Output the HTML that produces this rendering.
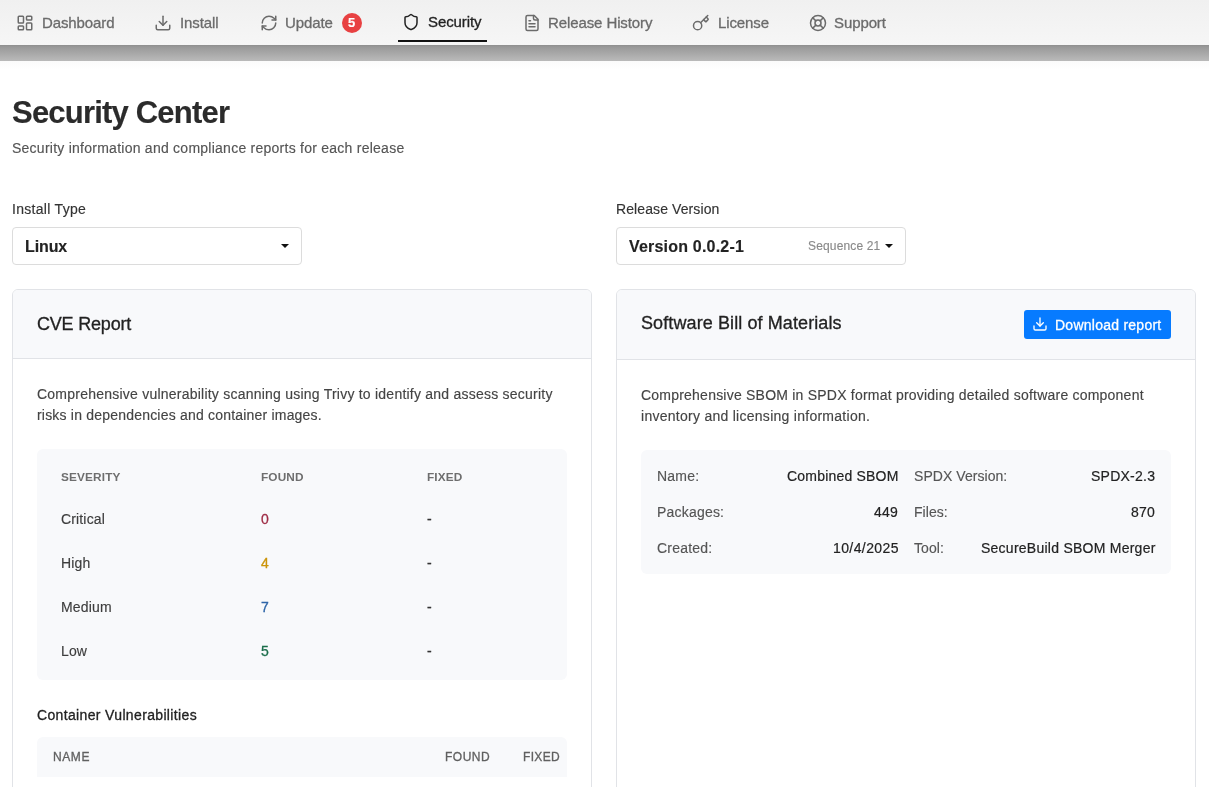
<!DOCTYPE html>
<html><head><meta charset="utf-8">
<style>
*{box-sizing:border-box;margin:0;padding:0}
html,body{width:1209px;height:787px;overflow:hidden;background:#fff;font-family:"Liberation Sans",sans-serif;color:#222}
.t{position:absolute;white-space:nowrap;line-height:1;will-change:transform;-webkit-text-stroke:0.15px currentColor}
.m{-webkit-text-stroke:0.3px currentColor}
.s{-webkit-text-stroke:0.2px currentColor}
.ic{position:absolute;fill:none;stroke:currentColor;stroke-linecap:round;stroke-linejoin:round}
.box{position:absolute}
</style></head><body>
<div class="box" style="left:0;top:0;width:1209px;height:45px;background:linear-gradient(#f0f0f0,#f6f6f6)"></div>
<div class="box" style="left:0;top:45px;width:1209px;height:16px;background:linear-gradient(#8e8e8e 0px,#999 2px,#bababa 100%)"></div>
<div class="box" style="left:0;top:61px;width:1209px;height:8px;background:linear-gradient(#fbfbfb,#fff)"></div>
<svg class="ic" viewBox="0 0 24 24" style="left:16px;top:14px;width:18px;height:18px;color:#6b6b6b;stroke-width:2"><rect x="3" y="3" width="7" height="9" rx="1"/><rect x="14" y="3" width="7" height="5" rx="1"/><rect x="14" y="12" width="7" height="9" rx="1"/><rect x="3" y="16" width="7" height="5" rx="1"/></svg>
<div class="t m" style="left:42.00px;top:15.20px;font-size:15px;color:#6b6b6b;font-weight:normal;letter-spacing:-0.1px;">Dashboard</div>
<svg class="ic" viewBox="0 0 24 24" style="left:154px;top:14px;width:18px;height:18px;color:#6b6b6b;stroke-width:2"><path d="M21 15v4a2 2 0 0 1-2 2H5a2 2 0 0 1-2-2v-4"/><polyline points="7 10 12 15 17 10"/><line x1="12" y1="15" x2="12" y2="3"/></svg>
<div class="t m" style="left:180.00px;top:15.20px;font-size:15px;color:#6b6b6b;font-weight:normal;letter-spacing:-0.1px;">Install</div>
<svg class="ic" viewBox="0 0 24 24" style="left:260px;top:14px;width:18px;height:18px;color:#6b6b6b;stroke-width:2"><path d="M3 12a9 9 0 0 1 9-9 9.75 9.75 0 0 1 6.74 2.74L21 8"/><path d="M21 3v5h-5"/><path d="M21 12a9 9 0 0 1-9 9 9.75 9.75 0 0 1-6.74-2.74L3 16"/><path d="M8 16H3v5"/></svg>
<div class="t m" style="left:285.30px;top:15.20px;font-size:15px;color:#6b6b6b;font-weight:normal;letter-spacing:-0.1px;">Update</div>
<svg class="ic" viewBox="0 0 24 24" style="left:402px;top:13px;width:18px;height:18px;color:#222;stroke-width:2"><path d="M20 13c0 5-3.5 7.5-7.66 8.95a1 1 0 0 1-.67-.01C7.5 20.5 4 18 4 13V6a1 1 0 0 1 1-1c2 0 4.5-1.2 6.24-2.72a1.17 1.17 0 0 1 1.52 0C14.51 3.81 17 5 19 5a1 1 0 0 1 1 1z"/></svg>
<div class="t m" style="left:427.50px;top:14.10px;font-size:15px;color:#222;font-weight:normal;letter-spacing:-0.1px;">Security</div>
<svg class="ic" viewBox="0 0 24 24" style="left:523px;top:14px;width:18px;height:18px;color:#6b6b6b;stroke-width:2"><path d="M15 2H6a2 2 0 0 0-2 2v16a2 2 0 0 0 2 2h12a2 2 0 0 0 2-2V7Z"/><path d="M14 2v4a2 2 0 0 0 2 2h4"/><path d="M10 9H8"/><path d="M16 13H8"/><path d="M16 17H8"/></svg>
<div class="t m" style="left:548.40px;top:15.20px;font-size:15px;color:#6b6b6b;font-weight:normal;letter-spacing:-0.1px;">Release History</div>
<svg class="ic" viewBox="0 0 24 24" style="left:692px;top:14px;width:18px;height:18px;color:#6b6b6b;stroke-width:2"><path d="m15.5 7.5 2.3 2.3a1 1 0 0 0 1.4 0l2.1-2.1a1 1 0 0 0 0-1.4L19 4"/><path d="m21 2-9.6 9.6"/><circle cx="7.5" cy="15.5" r="5.5"/></svg>
<div class="t m" style="left:717.60px;top:15.20px;font-size:15px;color:#6b6b6b;font-weight:normal;letter-spacing:-0.1px;">License</div>
<svg class="ic" viewBox="0 0 24 24" style="left:809px;top:14px;width:18px;height:18px;color:#6b6b6b;stroke-width:2"><circle cx="12" cy="12" r="10"/><path d="m4.93 4.93 4.24 4.24"/><path d="m14.83 9.17 4.24-4.24"/><path d="m14.83 14.83 4.24 4.24"/><path d="m9.17 14.83-4.24 4.24"/><circle cx="12" cy="12" r="4"/></svg>
<div class="t m" style="left:834.20px;top:15.20px;font-size:15px;color:#6b6b6b;font-weight:normal;letter-spacing:-0.1px;">Support</div>
<div class="box" style="left:398px;top:40px;width:89px;height:2px;background:#111"></div>
<div class="box" style="left:342px;top:13px;width:20px;height:20px;border-radius:10px;background:#e84142"></div>
<div class="t " style="left:347.60px;top:16.30px;font-size:13px;color:#fff;font-weight:bold;letter-spacing:0px;">5</div>
<div class="t " style="left:11.80px;top:96.76px;font-size:31px;color:#2b2b2b;font-weight:bold;letter-spacing:-0.8px;">Security Center</div>
<div class="t " style="left:12.00px;top:140.85px;font-size:14px;color:#555;font-weight:normal;letter-spacing:0.25px;">Security information and compliance reports for each release</div>
<div class="t " style="left:12.00px;top:202.25px;font-size:14px;color:#333;font-weight:normal;letter-spacing:0.3px;">Install Type</div>
<div class="t " style="left:616.00px;top:202.25px;font-size:14px;color:#333;font-weight:normal;letter-spacing:0.1px;">Release Version</div>
<div class="box" style="left:12px;top:227px;width:290px;height:38px;border:1px solid #dcdcdc;border-radius:4px;background:#fff"></div>
<div class="box" style="left:616px;top:227px;width:290px;height:38px;border:1px solid #dcdcdc;border-radius:4px;background:#fff"></div>
<div class="t " style="left:24.80px;top:238.66px;font-size:16px;color:#222;font-weight:bold;letter-spacing:-0.1px;">Linux</div>
<div class="t " style="left:629.00px;top:238.96px;font-size:16px;color:#222;font-weight:bold;letter-spacing:0.2px;">Version 0.0.2-1</div>
<div class="t " style="left:808.40px;top:239.64px;font-size:12px;color:#8a8a8a;font-weight:normal;letter-spacing:0.15px;">Sequence 21</div>
<div class="box" style="left:281px;top:244px;width:0;height:0;border-left:4px solid transparent;border-right:4px solid transparent;border-top:4px solid #111"></div>
<div class="box" style="left:885px;top:244px;width:0;height:0;border-left:4px solid transparent;border-right:4px solid transparent;border-top:4px solid #111"></div>
<div class="box" style="left:12px;top:289px;width:580px;height:520px;border:1px solid #e1e3e7;border-radius:6px;background:#fff;overflow:hidden"><div style="height:69px;background:#f8f9fb;border-bottom:1px solid #e1e3e7"></div></div>
<div class="box" style="left:616px;top:289px;width:580px;height:520px;border:1px solid #e1e3e7;border-radius:6px;background:#fff;overflow:hidden"><div style="height:70px;background:#f8f9fb;border-bottom:1px solid #e1e3e7"></div></div>
<div class="t m" style="left:37.00px;top:314.96px;font-size:18px;color:#222;font-weight:normal;letter-spacing:-0.2px;">CVE Report</div>
<div class="t " style="left:37.00px;top:386.65px;font-size:14px;color:#444;font-weight:normal;letter-spacing:0.23px;">Comprehensive vulnerability scanning using Trivy to identify and assess security</div>
<div class="t " style="left:37.00px;top:407.65px;font-size:14px;color:#444;font-weight:normal;letter-spacing:0.2px;">risks in dependencies and container images.</div>
<div class="box" style="left:37px;top:449px;width:530px;height:231px;background:#f8f9fb;border-radius:6px"></div>
<div class="t " style="left:61.00px;top:471.81px;font-size:11.8px;color:#6e6e6e;font-weight:bold;letter-spacing:0.15px;-webkit-text-stroke:0">SEVERITY</div>
<div class="t " style="left:261.00px;top:471.81px;font-size:11.8px;color:#6e6e6e;font-weight:bold;letter-spacing:0.15px;-webkit-text-stroke:0">FOUND</div>
<div class="t " style="left:427.00px;top:471.81px;font-size:11.8px;color:#6e6e6e;font-weight:bold;letter-spacing:0.15px;-webkit-text-stroke:0">FIXED</div>
<div class="t " style="left:61.00px;top:511.95px;font-size:14px;color:#3d3d3d;font-weight:normal;letter-spacing:0.15px;">Critical</div>
<div class="t m" style="left:261.00px;top:511.95px;font-size:14px;color:#9e2c45;font-weight:normal;letter-spacing:0px;">0</div>
<div class="t m" style="left:427.00px;top:511.95px;font-size:14px;color:#333;font-weight:normal;letter-spacing:0.3px;">-</div>
<div class="t " style="left:61.00px;top:555.95px;font-size:14px;color:#3d3d3d;font-weight:normal;letter-spacing:0.15px;">High</div>
<div class="t m" style="left:261.00px;top:555.95px;font-size:14px;color:#cc950a;font-weight:normal;letter-spacing:0px;">4</div>
<div class="t m" style="left:427.00px;top:555.95px;font-size:14px;color:#333;font-weight:normal;letter-spacing:0.3px;">-</div>
<div class="t " style="left:61.00px;top:599.95px;font-size:14px;color:#3d3d3d;font-weight:normal;letter-spacing:0.15px;">Medium</div>
<div class="t m" style="left:261.00px;top:599.95px;font-size:14px;color:#2f66a8;font-weight:normal;letter-spacing:0px;">7</div>
<div class="t m" style="left:427.00px;top:599.95px;font-size:14px;color:#333;font-weight:normal;letter-spacing:0.3px;">-</div>
<div class="t " style="left:61.00px;top:643.95px;font-size:14px;color:#3d3d3d;font-weight:normal;letter-spacing:0.15px;">Low</div>
<div class="t m" style="left:261.00px;top:643.95px;font-size:14px;color:#1b6e4b;font-weight:normal;letter-spacing:0px;">5</div>
<div class="t m" style="left:427.00px;top:643.95px;font-size:14px;color:#333;font-weight:normal;letter-spacing:0.3px;">-</div>
<div class="t m" style="left:37.00px;top:707.85px;font-size:14px;color:#222;font-weight:normal;letter-spacing:0.35px;">Container Vulnerabilities</div>
<div class="box" style="left:37px;top:737px;width:530px;height:40px;background:#f8f9fb;border-radius:6px 6px 0 0"></div>
<div class="t m" style="left:53.00px;top:750.84px;font-size:12px;color:#606060;font-weight:normal;letter-spacing:0.6px;">NAME</div>
<div class="t m" style="left:445.00px;top:750.84px;font-size:12px;color:#606060;font-weight:normal;letter-spacing:0.5px;">FOUND</div>
<div class="t m" style="left:523.00px;top:750.84px;font-size:12px;color:#606060;font-weight:normal;letter-spacing:0.35px;">FIXED</div>
<div class="t m" style="left:641.00px;top:314.46px;font-size:18px;color:#222;font-weight:normal;letter-spacing:0.1px;">Software Bill of Materials</div>
<div class="box" style="left:1024px;top:310px;width:147px;height:29px;background:#077bff;border-radius:3px"></div>
<svg class="ic" viewBox="0 0 24 24" style="left:1032px;top:316px;width:16px;height:16px;color:#fff;stroke-width:2"><path d="M21 15v4a2 2 0 0 1-2 2H5a2 2 0 0 1-2-2v-4"/><polyline points="7 10 12 15 17 10"/><line x1="12" y1="15" x2="12" y2="3"/></svg>
<div class="t m" style="left:1055.00px;top:317.85px;font-size:14px;color:#fff;font-weight:normal;letter-spacing:0.25px;">Download report</div>
<div class="t " style="left:641.00px;top:387.65px;font-size:14px;color:#444;font-weight:normal;letter-spacing:0.22px;">Comprehensive SBOM in SPDX format providing detailed software component</div>
<div class="t " style="left:641.00px;top:408.65px;font-size:14px;color:#444;font-weight:normal;letter-spacing:0.27px;">inventory and licensing information.</div>
<div class="box" style="left:641px;top:450px;width:530px;height:124px;background:#f8f9fb;border-radius:6px"></div>
<div class="t " style="left:657.00px;top:469.45px;font-size:14px;color:#555;font-weight:normal;letter-spacing:0.2px;">Name:</div>
<div class="t s" style="right:310.60px;top:469.45px;font-size:14px;color:#222;font-weight:normal;letter-spacing:0.2px;">Combined SBOM</div>
<div class="t " style="left:914.00px;top:469.45px;font-size:14px;color:#555;font-weight:normal;letter-spacing:0.05px;">SPDX Version:</div>
<div class="t s" style="right:53.60px;top:469.45px;font-size:14px;color:#222;font-weight:normal;letter-spacing:0.25px;">SPDX-2.3</div>
<div class="t " style="left:657.00px;top:505.20px;font-size:14px;color:#555;font-weight:normal;letter-spacing:0.2px;">Packages:</div>
<div class="t s" style="right:310.60px;top:505.20px;font-size:14px;color:#222;font-weight:normal;letter-spacing:0.2px;">449</div>
<div class="t " style="left:914.00px;top:505.20px;font-size:14px;color:#555;font-weight:normal;letter-spacing:0.05px;">Files:</div>
<div class="t s" style="right:53.60px;top:505.20px;font-size:14px;color:#222;font-weight:normal;letter-spacing:0.25px;">870</div>
<div class="t " style="left:657.00px;top:540.95px;font-size:14px;color:#555;font-weight:normal;letter-spacing:0.2px;">Created:</div>
<div class="t s" style="right:310.60px;top:540.95px;font-size:14px;color:#222;font-weight:normal;letter-spacing:0.4px;">10/4/2025</div>
<div class="t " style="left:914.00px;top:540.95px;font-size:14px;color:#555;font-weight:normal;letter-spacing:0.05px;">Tool:</div>
<div class="t s" style="right:53.60px;top:540.95px;font-size:14px;color:#222;font-weight:normal;letter-spacing:0.25px;">SecureBuild SBOM Merger</div>
</body></html>
